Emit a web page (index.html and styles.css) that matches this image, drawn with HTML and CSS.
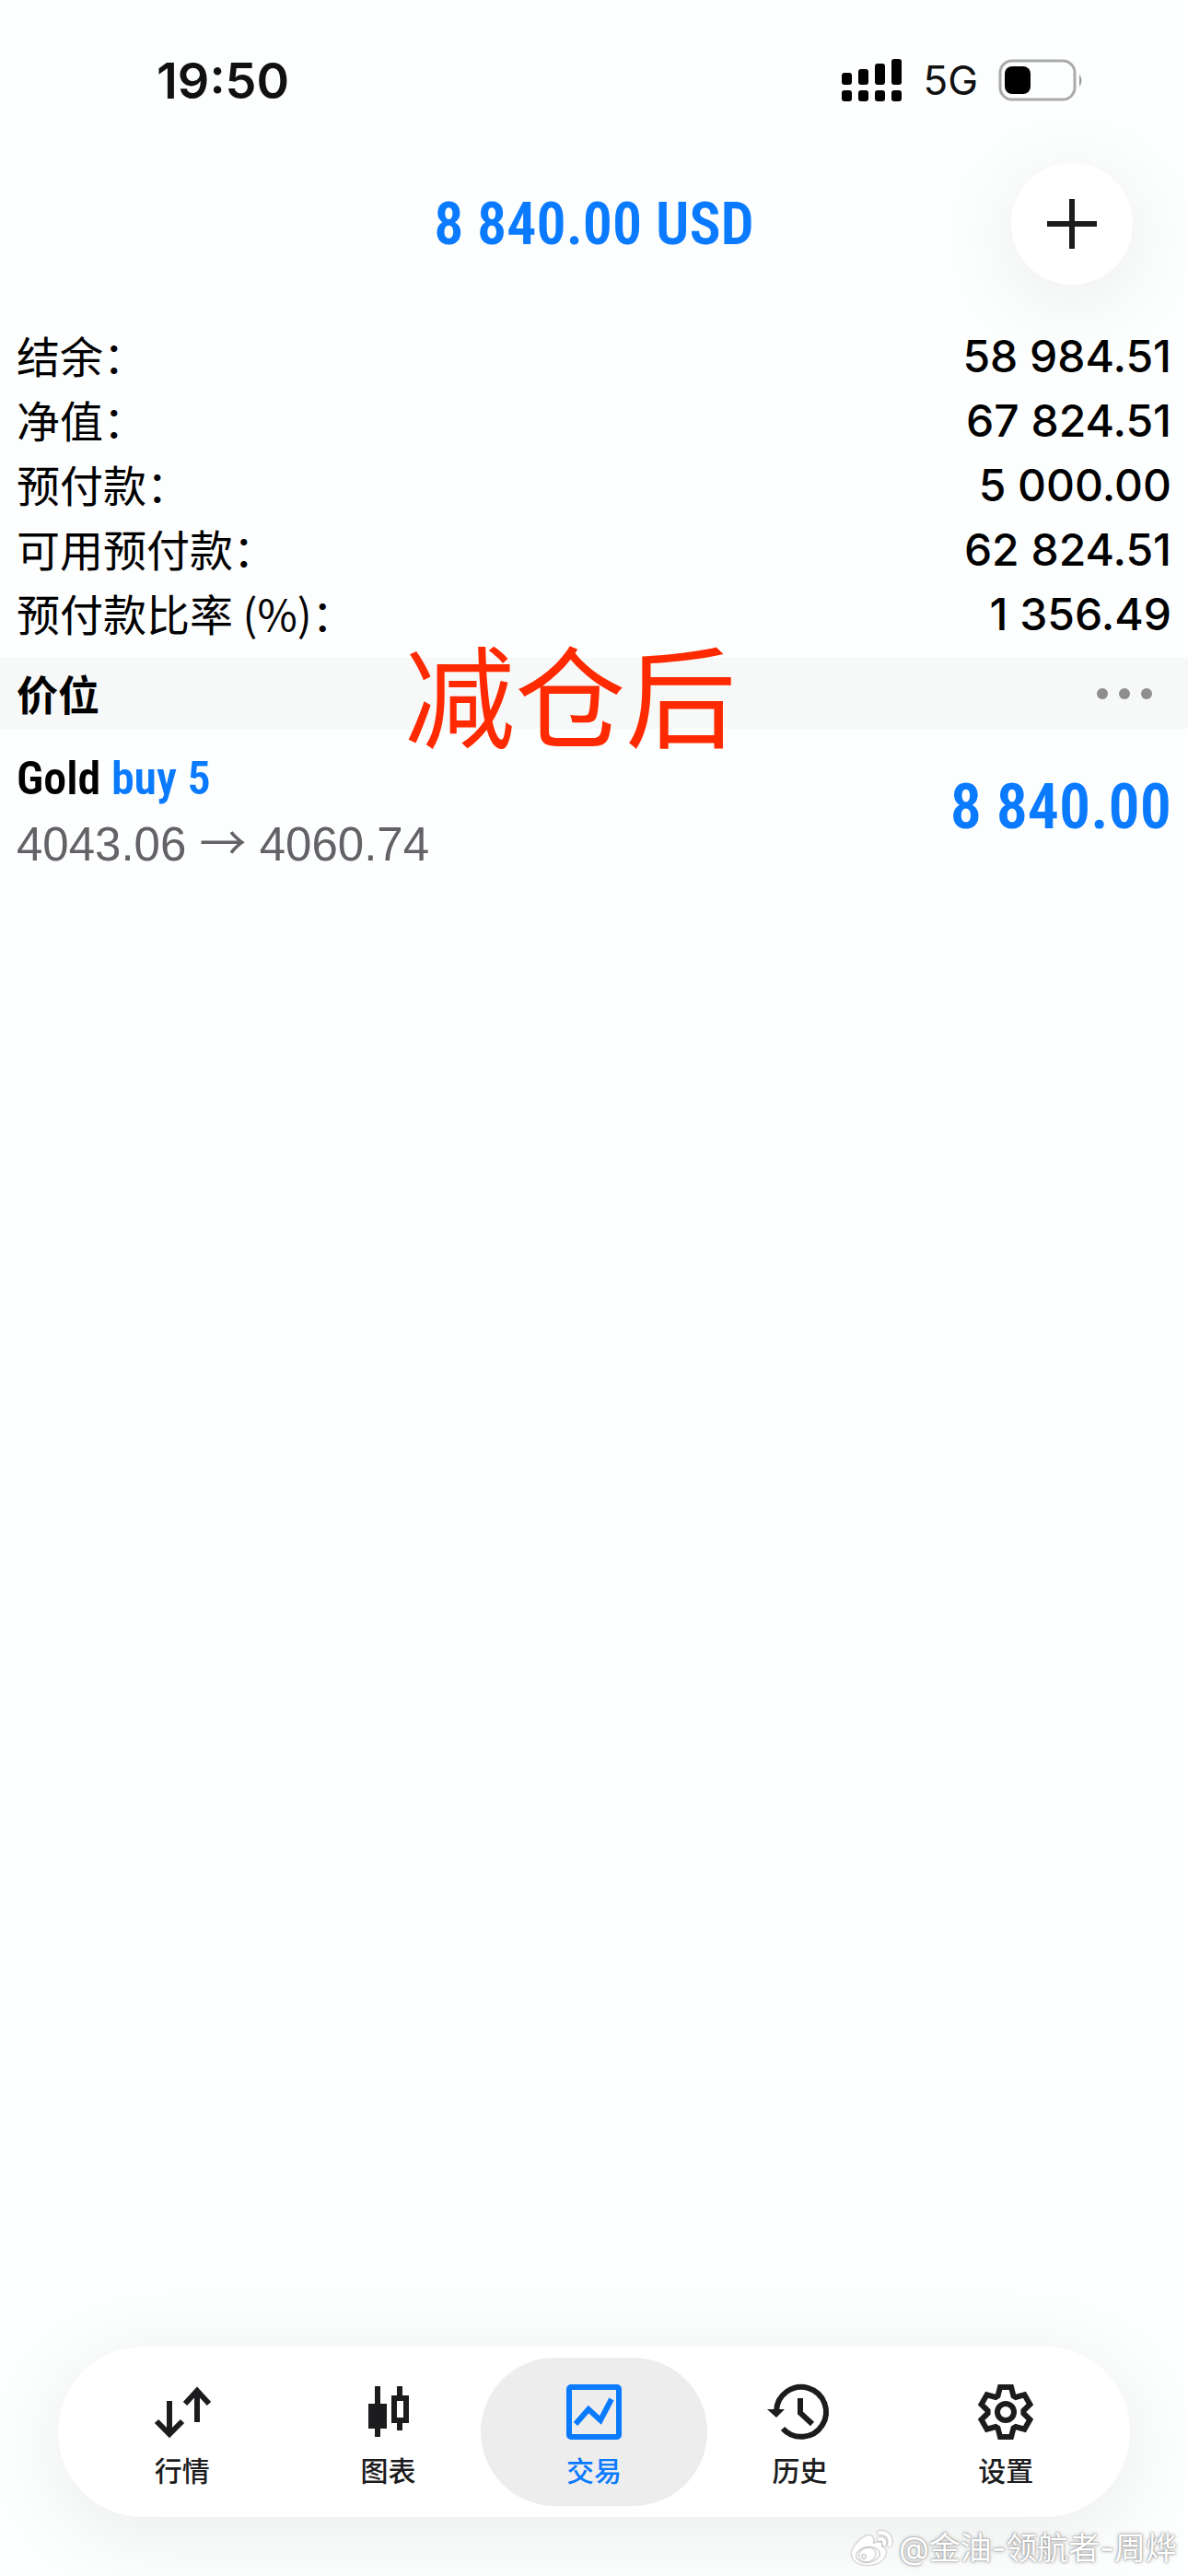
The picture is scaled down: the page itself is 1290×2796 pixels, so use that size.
FILE: index.html
```
<!DOCTYPE html>
<html lang="zh-CN">

<head>
    <meta charset="UTF-8">
    <meta name="viewport" content="width=device-width, initial-scale=1.0">
    <title>交易</title>
    <link rel="stylesheet" href="styles.css">
</head>

<body>

    <div class="status-bar">
        <span class="time">19:50</span>
        <div class="status-icons">
            <svg class="signal" width="66" height="48" viewBox="0 0 66 48">
                <rect x="0" y="16" width="11" height="13" rx="3" />
                <rect x="18" y="12" width="11" height="17" rx="3" />
                <rect x="36" y="6" width="11" height="23" rx="3" />
                <rect x="54" y="1" width="11" height="28" rx="3" />
                <rect x="0" y="35" width="11" height="12" rx="3" />
                <rect x="18" y="35" width="11" height="12" rx="3" />
                <rect x="36" y="35" width="11" height="12" rx="3" />
                <rect x="54" y="35" width="11" height="12" rx="3" />
            </svg>
            <span class="network">5G</span>
            <svg class="battery" width="94" height="48" viewBox="0 0 94 48">
                <rect x="2" y="3" width="81" height="42" rx="13" fill="none" stroke="#aaa" stroke-width="3" />
                <rect x="7" y="9" width="28" height="30" rx="8" />
                <path d="M88 18q5 6 0 13z" fill="#999" />
            </svg>
        </div>
    </div>

    <header class="title-bar">
        <h1 class="total">8 840.00 USD</h1>
        <button class="add-button" type="button" aria-label="新订单">
            <svg width="56" height="56" viewBox="0 0 56 56">
                <path d="M28 1v54M1 28h54" stroke="#1c1c1e" stroke-width="6" />
            </svg>
        </button>
    </header>

    <main>
        <dl class="account">
            <div class="account-row">
                <dt>结余：</dt>
                <dd>58 984.51</dd>
            </div>
            <div class="account-row">
                <dt>净值：</dt>
                <dd>67 824.51</dd>
            </div>
            <div class="account-row">
                <dt>预付款：</dt>
                <dd>5 000.00</dd>
            </div>
            <div class="account-row">
                <dt>可用预付款：</dt>
                <dd>62 824.51</dd>
            </div>
            <div class="account-row">
                <dt>预付款比率 (%)：</dt>
                <dd>1 356.49</dd>
            </div>
        </dl>

        <div class="section-bar">
            <h2>价位</h2>
            <button class="more-button" type="button" aria-label="更多">
                <svg width="62" height="14" viewBox="0 0 62 14">
                    <circle cx="7" cy="7" r="6" />
                    <circle cx="31" cy="7" r="6" />
                    <circle cx="55" cy="7" r="6" />
                </svg>
            </button>
            <p class="note">减仓后</p>
        </div>

        <div class="position">
            <div>
                <p class="symbol">Gold <span class="side">buy 5</span></p>
                <p class="prices">4043.06 <span class="arrow">→</span> 4060.74</p>
            </div>
            <span class="profit">8 840.00</span>
        </div>
    </main>

    <nav class="tab-bar">
        <a class="tab" href="#">
            <svg class="tab-icon" viewBox="0 0 66 66">
                <path d="M19 20v35M5 42l14 14 14-14M49 43V9M36 23l13-14 13 14" />
            </svg>
            <span>行情</span>
        </a>
        <a class="tab" href="#">
            <svg class="tab-icon" viewBox="0 0 66 66">
                <path d="M22 4v55M46 4v12M46 42v10" />
                <rect class="solid" x="12" y="23" width="20" height="27" />
                <rect x="40" y="17" width="13" height="24" />
            </svg>
            <span>图表</span>
        </a>
        <a class="tab active" href="#">
            <svg class="tab-icon" viewBox="0 0 66 66">
                <rect x="6" y="5" width="54" height="54" rx="2" />
                <path d="M13 45l14-16 13 12 12-23" />
            </svg>
            <span>交易</span>
        </a>
        <a class="tab" href="#">
            <svg class="tab-icon" viewBox="0 0 66 66">
                <path d="M14 50a27 27 0 1 0-7-19M33 17v16l13 12" />
                <path class="solid" d="M-3 29h19l-9 9z" />
            </svg>
            <span>历史</span>
        </a>
        <a class="tab" href="#">
            <svg class="tab-icon" viewBox="-33 -32 66 66">
                <path d="M-8.5-17.5L-6-27H6L8.5-17.5 10.9-16.1 20.4-18.7 26.4-8.3 19.4-1.4V1.4L26.4 8.3 20.4 18.7 10.9 16.1 8.5 17.5 6 27H-6L-8.5 17.5-10.9 16.1-20.4 18.7-26.4 8.3-19.4 1.4V-1.4L-26.4-8.3-20.4-18.7-10.9-16.1z" />
                <circle r="9" />
            </svg>
            <span>设置</span>
        </a>
    </nav>

    <div class="watermark">
        <svg width="46" height="40" viewBox="0 0 46 40">
            <path fill="#fff" fill-rule="evenodd" d="M19 6c-7 1-18 12-18 20 0 8 8 12 17 12 12 0 20-7 20-14 0-4-3-5-5-6 1-3 1-7-9-3 1-5 0-9-5-9zM18 18c8-1 14 3 14 8s-6 9-13 10-14-3-14-8 6-9 13-10z" />
            <path fill="#fff" fill-rule="evenodd" d="M17 20c6-1 10 2 9 7-1 6-7 8-11 7s-7-4-5-9c1-2 4-5 7-5zM15 26a3 3 0 1 0 1 5 3 3 0 0 0-1-5z" />
            <path fill="none" stroke="#fff" stroke-width="4" stroke-linecap="round" d="M31 3c8-1 13 5 11 13M31 10c4-1 6 2 5 5" />
        </svg>
        <span>@金油-领航者-周烨</span>
    </div>

</body>

</html>
```

FILE: styles.css
```
* {
    box-sizing: border-box;
}

body {
    margin: 0;
    min-height: 100vh;
    display: flex;
    flex-direction: column;
    position: relative;
    background-color: #fdfefe;
    color: #000;
    font-family: Inter, "Noto Sans CJK SC", sans-serif;
}

h1,
h2,
p,
dl,
dd {
    margin: 0;
}

button {
    border: none;
    padding: 0;
    cursor: pointer;
}

/* status bar */
.status-bar {
    display: flex;
    justify-content: space-between;
    align-items: center;
    height: 174px;
    padding: 0 112px 0 170px;
}

.time {
    font-size: 54px;
    font-weight: 600;
    color: #111;
}

.status-icons {
    display: flex;
    align-items: center;
}

.network {
    margin: 0 22px;
    font-size: 44px;
    color: #111;
}

/* title */
.title-bar {
    display: grid;
    grid-template-columns: 1fr auto 1fr;
    align-items: center;
    height: 138px;
    padding: 0 60px;
}

.total,
.symbol,
.profit {
    font-family: "Roboto Condensed", Roboto, sans-serif;
    font-weight: 600;
}

.total {
    grid-column: 2;
    font-size: 64px;
    color: #0a7aff;
}

.add-button {
    justify-self: end;
    display: flex;
    justify-content: center;
    align-items: center;
    width: 132px;
    height: 132px;
    border-radius: 50%;
    background-color: #fff;
    box-shadow: 0 16px 90px rgba(0, 0, 0, 0.08);
}

main {
    flex: 1;
}

/* account summary */
.account {
    padding: 40px 18px 12px;
}

.account-row {
    display: flex;
    justify-content: space-between;
    align-items: flex-start;
    height: 70px;
}

.account-row dt {
    font-family: "Noto Sans CJK SC", sans-serif;
    font-size: 47px;
    line-height: 66px;
}

.account-row dd {
    font-size: 48px;
    font-weight: 500;
    line-height: 70px;
}

.section-bar {
    position: relative;
    display: flex;
    justify-content: space-between;
    align-items: center;
    height: 77px;
    padding: 0 38px 0 18px;
    background-color: #f7f8f8;
}

.section-bar h2 {
    font-family: "Noto Sans CJK SC", sans-serif;
    font-size: 45px;
    line-height: 70px;
    font-weight: bold;
}

.more-button {
    display: flex;
    background: none;
    fill: #8e8e8e;
}

.note {
    position: absolute;
    top: 60%;
    left: 48%;
    transform: translate(-50%, -50%);
    font-size: 120px;
    line-height: 120px;
    white-space: nowrap;
    color: #ff2a00;
}

/* open position */
.position {
    display: flex;
    justify-content: space-between;
    align-items: flex-start;
    padding: 18px;
}

.symbol {
    font-size: 50px;
    line-height: 72px;
}

.side,
.profit {
    color: #0a7aff;
}

.prices {
    font-family: "Liberation Sans", sans-serif;
    font-size: 51px;
    line-height: 72px;
    color: #626267;
}

.arrow {
    font-family: "Noto Sans CJK SC", sans-serif;
    line-height: 1;
}

.profit {
    font-size: 68px;
    line-height: 134px;
}

/* bottom tabs */
.tab-bar {
    display: flex;
    margin: 0 63px 64px;
    padding: 12px 23px;
    border-radius: 93px;
    background-color: #fff;
    box-shadow: 0 16px 90px rgba(0, 0, 0, 0.08);
}

.tab {
    position: relative;
    flex: 1;
    display: flex;
    flex-direction: column;
    align-items: center;
    gap: 10px;
    padding: 27px 0 18px;
    font-size: 30px;
    line-height: 40px;
    font-weight: 500;
    text-decoration: none;
    color: #1c1c1e;
}

.tab span,
.tab-icon {
    position: relative;
}

.tab-icon {
    width: 66px;
    height: 66px;
    overflow: visible;
    fill: none;
    stroke: currentColor;
    stroke-width: 6;
}

.tab-icon .solid {
    fill: currentColor;
    stroke: none;
}

.tab.active {
    color: #0a7aff;
}

.tab.active::before {
    content: "";
    position: absolute;
    inset: 0 -11px;
    border-radius: 81px;
    background-color: #ededed;
}

.watermark {
    position: absolute;
    right: 12px;
    bottom: 6px;
    display: flex;
    align-items: center;
    gap: 6px;
    font-size: 34px;
    line-height: 48px;
    color: #fff;
    text-shadow: 0 0 2px #777, 0 0 4px #aaa;
}

.watermark svg {
    filter: drop-shadow(0 0 1px #888);
}
```
